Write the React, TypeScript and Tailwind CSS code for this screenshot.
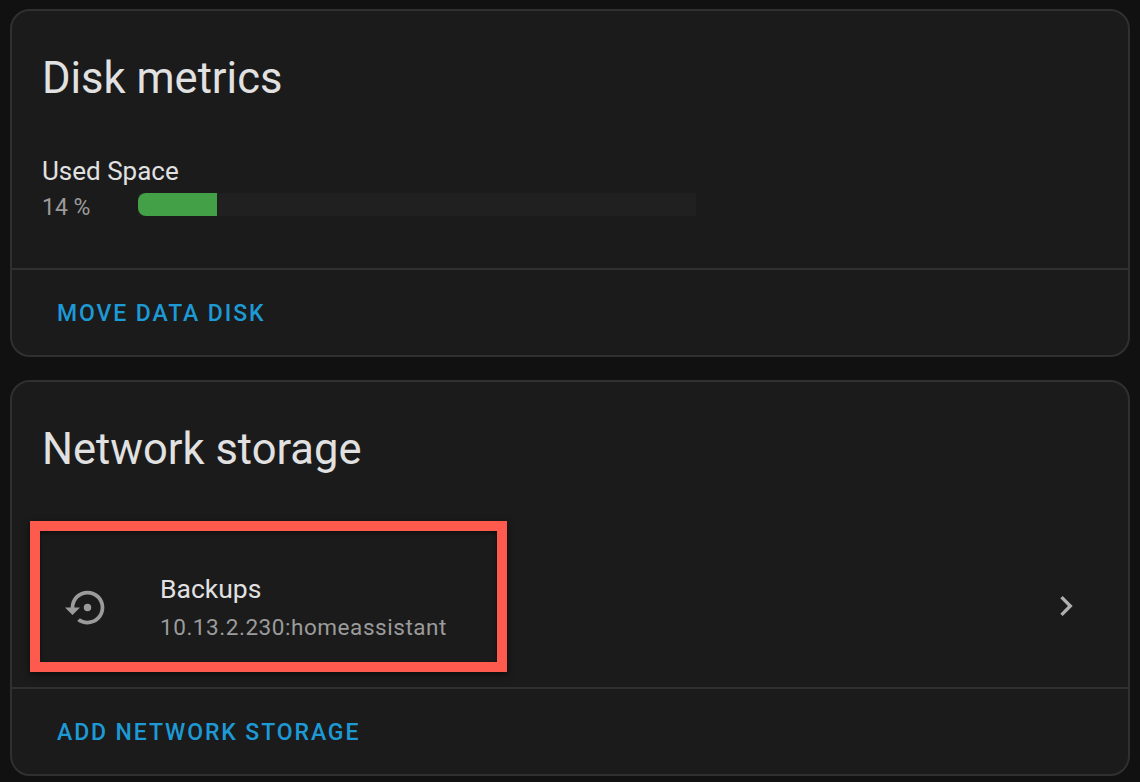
import React from 'react';

const font = { fontFamily: 'Roboto, sans-serif' };

function Card({ title, children }: { title: string; children: React.ReactNode }) {
  return (
    <div className="rounded-[20px] border-2 border-[#303030] bg-[#1b1b1b]">
      <h1 className="pl-[30px] pt-[40px] text-[43.5px] leading-[56px] font-normal text-[#e1e1e1]">{title}</h1>
      {children}
    </div>
  );
}

function CardAction({ label }: { label: string }) {
  return (
    <div className="border-t-2 border-[#303030] pl-[45px] pt-[30px] pb-[27px]">
      <button className="block text-[23px] leading-[28px] font-medium tracking-[1.9px] text-[#1d9ad6]">{label}</button>
    </div>
  );
}

export default function App() {
  return (
    <div className="h-[782px] w-[1140px] overflow-hidden bg-[#111111] pl-[10px] pr-[10px] pt-[9px]" style={font}>
      <div className="flex flex-col gap-[23px]">
        <Card title="Disk metrics">
          <div className="pl-[30px] pt-[47px] pb-[44px]">
            <div className="text-[26px] leading-[34px] text-[#e1e1e1]">Used Space</div>
            <div className="flex items-start">
              <span className="mt-[4px] w-[96px] text-[23px] leading-[32px] text-[#9b9b9b]">14 %</span>
              <div className="mt-[5px] h-[23px] w-[558px] bg-[#202020]">
                <div className="h-full w-[79px] rounded-l-[8px] bg-[#43a047]" />
              </div>
            </div>
          </div>
          <CardAction label="MOVE DATA DISK" />
        </Card>

        <Card title="Network storage">
          <div className="relative pt-[50px]">
            <div className="flex h-[159px] items-center pl-[53px] pr-[42px]">
              <svg viewBox="0 0 24 24" className="h-[45px] w-[45px] shrink-0 fill-[#9b9b9b]">
                <path d="M12,3A9,9 0 0,0 3,12H0L4,16L8,12H5A7,7 0 0,1 12,5A7,7 0 0,1 19,12A7,7 0 0,1 12,19C10.5,19 9.09,18.5 7.94,17.7L6.5,19.14C8.04,20.3 9.94,21 12,21A9,9 0 0,0 21,12A9,9 0 0,0 12,3M14,12A2,2 0 0,0 12,10A2,2 0 0,0 10,12A2,2 0 0,0 12,14A2,2 0 0,0 14,12Z" />
              </svg>
              <div className="ml-[50px] flex-1">
                <div className="text-[26.5px] leading-[39px] text-[#e1e1e1]">Backups</div>
                <div className="text-[22.5px] leading-[39px] tracking-[0.55px] text-[#9b9b9b]">10.13.2.230:homeassistant</div>
              </div>
              <svg viewBox="0 0 24 24" className="mb-[4px] h-[40px] w-[40px] shrink-0 fill-[#b0b0b0]">
                <path d="M8.59,16.58L13.17,12L8.59,7.41L10,6L16,12L10,18L8.59,16.58Z" />
              </svg>
            </div>
            {/* red annotation box */}
            <div className="absolute left-[18px] top-[43px] h-[151px] w-[477px] border-[10px] border-[#fe5a4d] shadow-[0_2px_6px_rgba(0,0,0,0.6),inset_0_2px_4px_rgba(0,0,0,0.5)]" />
          </div>
          <CardAction label="ADD NETWORK STORAGE" />
        </Card>
      </div>
    </div>
  );
}
